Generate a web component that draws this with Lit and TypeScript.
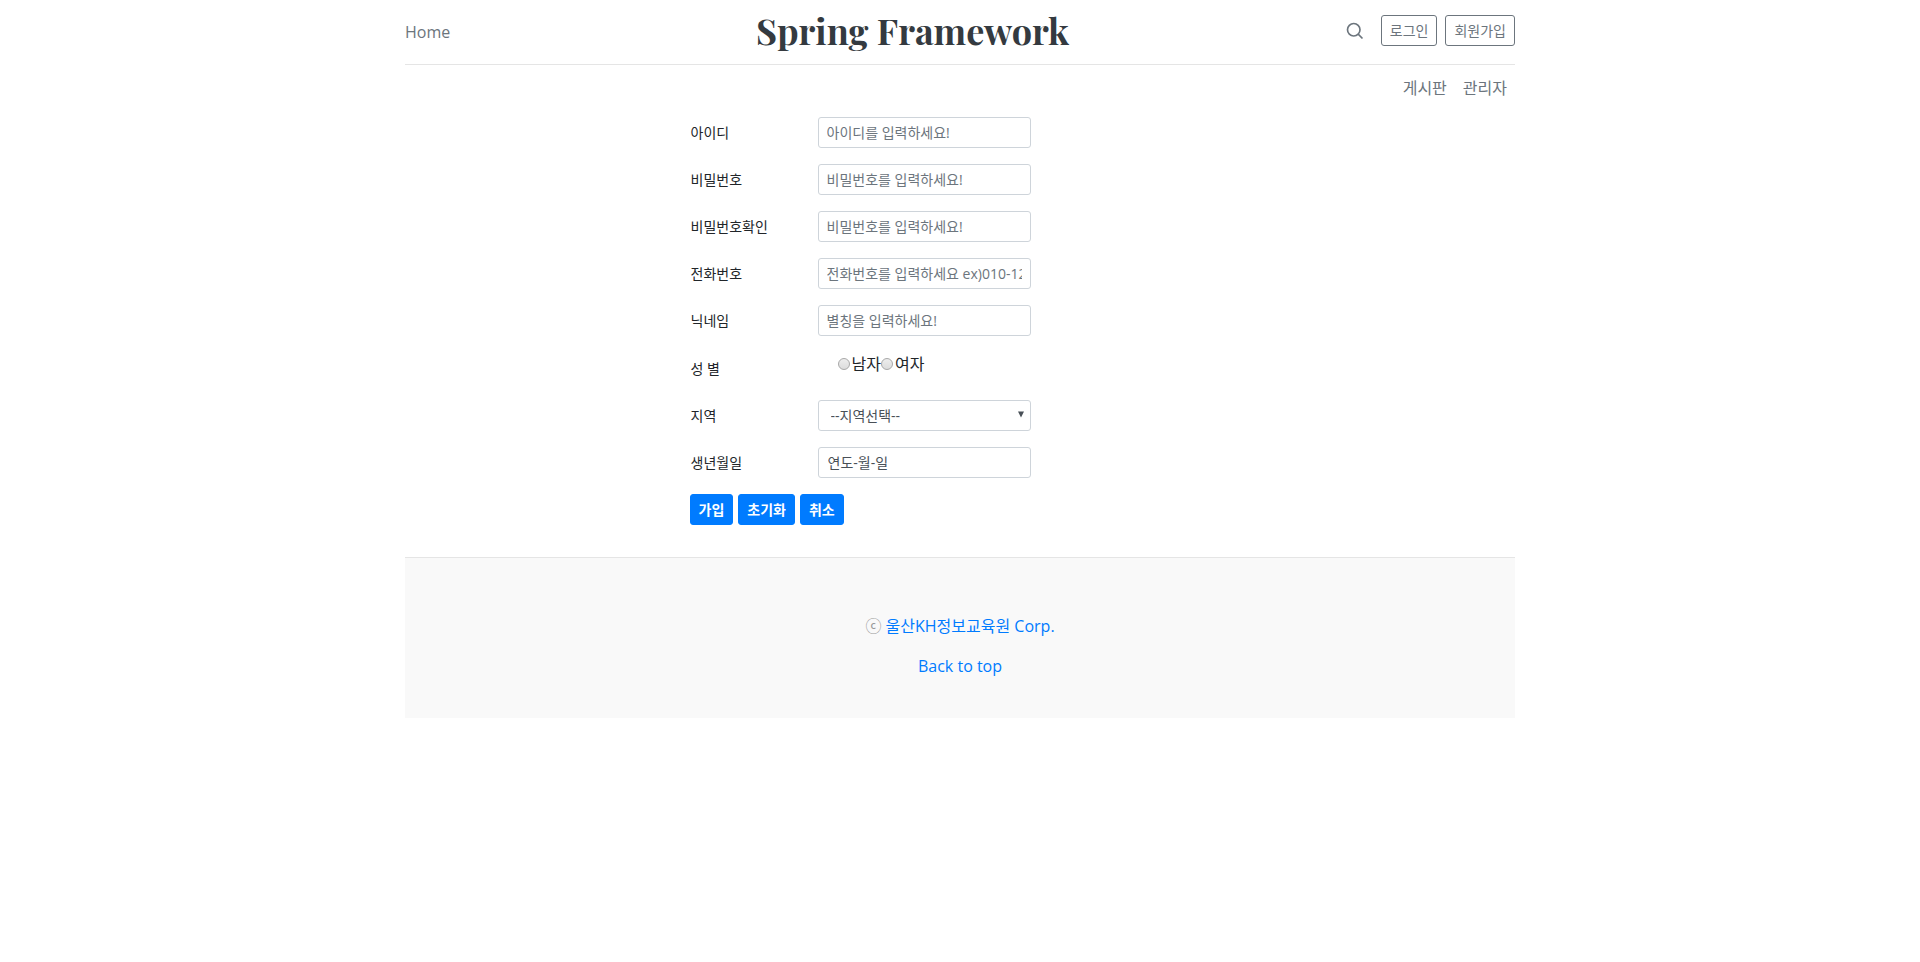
import { LitElement, html, css } from "lit";
import { customElement } from "lit/decorators.js";

interface TextField {
  id: string;
  label: string;
  type: string;
  placeholder: string;
}

const FIELDS: TextField[] = [
  { id: "userid", label: "아이디", type: "text", placeholder: "아이디를 입력하세요!" },
  { id: "password", label: "비밀번호", type: "password", placeholder: "비밀번호를 입력하세요!" },
  { id: "password2", label: "비밀번호확인", type: "password", placeholder: "비밀번호를 입력하세요!" },
  { id: "phone", label: "전화번호", type: "tel", placeholder: "전화번호를 입력하세요 ex)010-1234-5678" },
  { id: "nickname", label: "닉네임", type: "text", placeholder: "별칭을 입력하세요!" },
];

@customElement("app-root")
export class AppRoot extends LitElement {
  static styles = css`
    :host {
      display: block;
      min-height: 100vh;
      background: #fff;
      color: #212529;
      font: 400 16px/24px "Open Sans", "Noto Sans CJK KR", sans-serif;
    }
    *, *::before, *::after { box-sizing: border-box; }
    a { color: #007bff; text-decoration: none; }
    button, input, select { font-family: inherit; margin: 0; }
    .container { max-width: 1140px; margin: 0 auto; padding: 0 15px; }

    .header {
      display: grid;
      grid-template-columns: 3fr 5fr 4fr;
      align-items: center;
      margin: 0 -15px;
      padding: 8px 0;
    }
    .rule { border-bottom: 1px solid #e5e5e5; }
    .container .muted { color: #6c757d; }
    .home { padding-left: 15px; }
    .title {
      margin: 0;
      padding-bottom: 4px;
      text-align: center;
      color: #343a40;
      font: 700 36px/44px "Playfair Display", "Liberation Serif", serif;
    }
    .tools {
      display: flex;
      justify-content: flex-end;
      align-items: center;
      gap: 8px;
      padding: 0 15px 3px 0;
    }
    .search { display: flex; margin-right: 8px; }
    .btn {
      height: 31px;
      padding: 4px 8px;
      border: 1px solid #6c757d;
      border-radius: 3px;
      background: transparent;
      color: #6c757d;
      font-size: 14px;
      line-height: 21px;
    }
    .btn.primary {
      background: #007bff;
      border-color: #007bff;
      color: #fff;
      font-weight: 700;
    }

    .nav {
      display: flex;
      justify-content: flex-end;
      gap: 16px;
      padding: 11px 8px 17px;
    }

    .form { margin-left: calc(25% + 7px); }
    .row {
      display: grid;
      grid-template-columns: 128px 213px;
      align-items: center;
      margin-bottom: 16px;
    }
    .label { padding-left: 1px; font-size: 14px; line-height: 21px; }
    .control {
      width: 100%;
      height: 31px;
      padding: 4px 8px;
      border: 1px solid #ced4da;
      border-radius: 3px;
      background: #fff;
      color: #495057;
      font-size: 14px;
      line-height: 21px;
      outline: none;
    }
    .control::placeholder { color: #6c757d; opacity: 1; }
    .control.date { padding-left: 9px; }
    .control.date::placeholder { color: #495057; }
    .select { position: relative; }
    .select .control { display: block; appearance: none; padding-left: 12px; }
    .arrow { position: absolute; right: 7px; top: 11px; pointer-events: none; }
    .radios { display: flex; align-items: center; padding: 0 0 8px 20px; }
    .radios label { display: flex; align-items: center; }
    .radio {
      appearance: none;
      width: 12px;
      height: 12px;
      margin-right: 2px;
      border: 1px solid #a8a8a8;
      border-radius: 50%;
      background: linear-gradient(#ededed, #dcdcdc);
    }
    .radio:checked { background: radial-gradient(#444 35%, #e4e4e4 40%); }
    .actions { display: flex; gap: 5px; }

    .footer {
      margin-top: 32px;
      padding: 56px 0 40px;
      border-top: 1px solid #e5e5e5;
      background: #f9f9f9;
      color: #999;
      text-align: center;
    }
    .footer p { margin: 0 0 16px; }
    .footer p:last-child { margin-bottom: 0; }
  `;

  render() {
    return html`
      <div class="container">
        <header class="rule">
          <div class="header">
            <a class="home muted" href="#">Home</a>
            <h1 class="title">Spring Framework</h1>
            <div class="tools">
              <a class="search muted" href="#" aria-label="Search">
                <svg width="20" height="20" viewBox="0 0 24 24" fill="none" stroke="currentColor"
                  stroke-width="2" stroke-linejoin="round">
                  <circle cx="10.5" cy="10.5" r="7.5"></circle>
                  <line x1="21" y1="21" x2="15.8" y2="15.8"></line>
                </svg>
              </a>
              <button class="btn" type="button">로그인</button>
              <button class="btn" type="button">회원가입</button>
            </div>
          </div>
        </header>
        <nav class="nav">
          <a class="muted" href="#">게시판</a>
          <a class="muted" href="#">관리자</a>
        </nav>
        <form class="form">
          ${FIELDS.map(
            (f) => html`
              <div class="row">
                <label class="label" for=${f.id}>${f.label}</label>
                <input class="control" id=${f.id} type=${f.type} placeholder=${f.placeholder} />
              </div>
            `
          )}
          <div class="row">
            <span class="label" id="gender-label">성 별</span>
            <div class="radios" role="radiogroup" aria-labelledby="gender-label">
              <label><input class="radio" type="radio" name="gender" value="m" />남자</label>
              <label><input class="radio" type="radio" name="gender" value="f" />여자</label>
            </div>
          </div>
          <div class="row">
            <label class="label" for="region">지역</label>
            <div class="select">
              <select class="control" id="region">
                <option>--지역선택--</option>
              </select>
              <svg class="arrow" width="6" height="7" viewBox="0 0 6 7" aria-hidden="true">
                <path d="M0 0.5h6L3 6.5z" fill="#495057"></path>
              </svg>
            </div>
          </div>
          <div class="row">
            <label class="label" for="birth">생년월일</label>
            <input class="control date" id="birth" type="text" placeholder="연도-월-일" />
          </div>
          <div class="actions">
            <button class="btn primary" type="submit">가입</button>
            <button class="btn primary" type="reset">초기화</button>
            <button class="btn primary" type="button">취소</button>
          </div>
        </form>
        <footer class="footer">
          <p>ⓒ <a href="#">울산KH정보교육원 Corp.</a></p>
          <p><a href="#">Back to top</a></p>
        </footer>
      </div>
    `;
  }
}
